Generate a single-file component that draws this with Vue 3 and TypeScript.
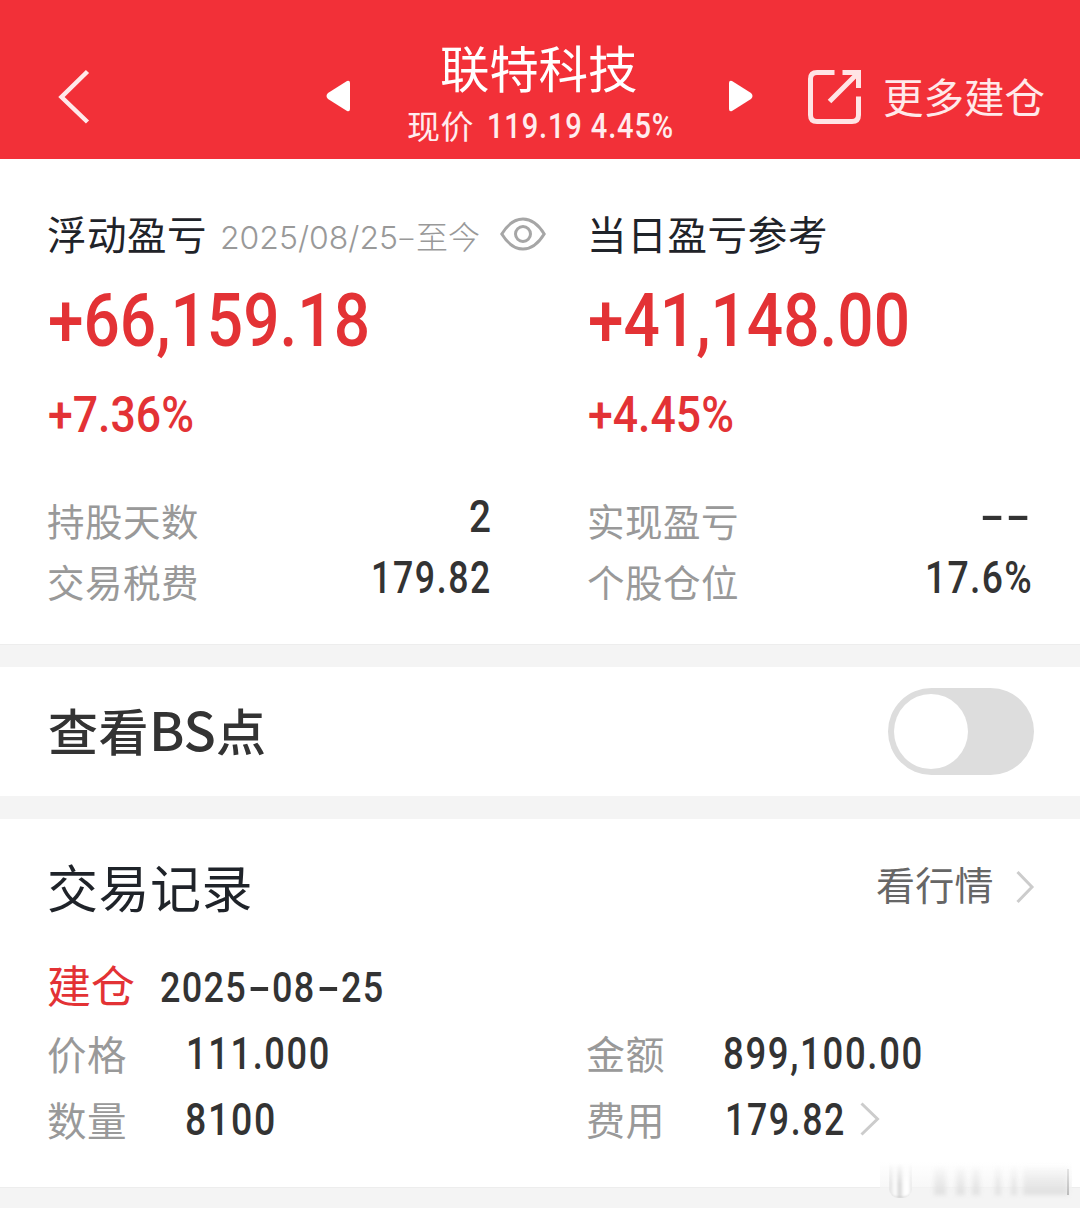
<script setup lang="ts">
import { h, type FunctionalComponent } from 'vue'

const LATIN = "Roboto, 'Liberation Sans', sans-serif"
const HAN = "'Noto Sans CJK SC', sans-serif"

interface NumProps { t: string; w: number; s: number; wt?: number; f?: string; ls?: number }
interface HanProps { t: string; s: number; p: number; wt?: number }

// Figures set to an exact advance width; the box is as tall as the digits.
const Num: FunctionalComponent<NumProps> = (p) => {
  const cap = p.s * 0.711
  return h('svg', { width: p.w, height: cap, class: 'fit' }, [
    h('text', {
      x: 0, y: cap, textLength: p.w, lengthAdjust: 'spacingAndGlyphs', fill: 'currentColor',
      'font-family': p.f ?? LATIN, 'font-size': p.s, 'font-weight': p.wt ?? 500,
      style: { letterSpacing: `${p.ls ?? 0}px` },
    }, p.t),
  ])
}
Num.props = ['t', 'w', 's', 'wt', 'f', 'ls']

// Chinese label with a fixed pitch; the box is one em tall.
const Han: FunctionalComponent<HanProps> = (p) =>
  h('svg', { width: p.p * p.t.length, height: p.s, class: 'fit' }, [
    h('text', {
      x: 0, y: p.s * 0.88, fill: 'currentColor', 'font-family': HAN, 'font-size': p.s,
      'font-weight': p.wt ?? 400, style: { letterSpacing: `${p.p - p.s}px` },
    }, p.t),
  ])
Han.props = ['t', 's', 'p', 'wt']
</script>

<template>
  <main class="page">
    <header class="bar">
      <svg class="back" width="34" height="56" viewBox="0 0 34 56" fill="none" stroke="#ffe9ea" stroke-width="4.5"><path d="M30.500 2.500 4.500 28 30.500 53" /></svg>
      <svg class="prev" width="24" height="32" viewBox="0 0 24 32" fill="#fff"><path d="M24 3v26q0 3-3 2L2 19q-3-3 0-6L21 1q3-1 3 2z" /></svg>
      <div class="title">
        <Han t="联特科技" :s="49.500" :p="49.300" />
        <div class="quote">
          <Han t="现价" :s="33" :p="33.500" />
          <Num t="119.19 4.45%" :w="187" :s="34.300" :wt="500" :ls="1" />
        </div>
      </div>
      <svg class="next" width="24" height="32" viewBox="0 0 24 32" fill="#fff"><path d="M0 3v26q0 3 3 2L22 19q3-3 0-6L3 1Q0 0 0 3z" /></svg>
      <svg class="share" width="56" height="56" viewBox="0 0 56 56" fill="none" stroke="#ffe4e5" stroke-width="5"><path d="M27.500 3.500H10Q3.500 3.500 3.500 10V46Q3.500 52.500 10 52.500H45Q51.500 52.500 51.500 46V27.500" /><path d="M35.500 3.500H51.500V19M51.500 3.500 22.500 32.500" /></svg>
      <Han class="more" t="更多建仓" :s="40.500" :p="40.500" />
    </header>

    <section class="summary">
      <div class="col left">
        <div class="head">
          <Han t="浮动盈亏" :s="39.500" :p="40" />
          <div class="range">
            <Num t="2025/08/25" :w="178" :s="31.500" :wt="300" f="Inter, sans-serif" />
            <Num class="dash" t="-" :w="17" :s="31.500" :wt="300" />
            <Han t="至今" :s="32" :p="32" :wt="300" />
          </div>
          <svg class="eye" width="46" height="34" viewBox="0 0 46 34" fill="none" stroke="#a6a6a6" stroke-width="3"><path d="M1.800 17Q11 2 23 2T44.200 17Q35 32 23 32T1.800 17Z" /><circle cx="23" cy="17" r="7.500" /></svg>
        </div>
        <Num class="big" t="+66,159.18" :w="322" :s="75" />
        <Num class="pct" t="+7.36%" :w="146" :s="49.500" />
        <div class="row r1"><Han t="持股天数" :s="37.500" :p="38" /><Num t="2" :w="22" :s="43.500" /></div>
        <div class="row"><Han t="交易税费" :s="37.500" :p="38" /><Num class="trail" t="179.82" :w="121" :s="43.500" :ls="2" /></div>
      </div>
      <div class="col right">
        <div class="head"><Han t="当日盈亏参考" :s="39.500" :p="40.200" /></div>
        <Num class="big" t="+41,148.00" :w="322" :s="75" />
        <Num class="pct" t="+4.45%" :w="146" :s="49.500" />
        <div class="row r1"><Han t="实现盈亏" :s="37.500" :p="38" /><Num class="none" t="--" :w="52" :s="43.500" :ls="1" /></div>
        <div class="row"><Han t="个股仓位" :s="37.500" :p="38" /><Num class="trail" t="17.6%" :w="108" :s="43.500" :ls="1.500" /></div>
      </div>
    </section>

    <section class="points">
      <div class="bs">
        <Han t="查看" :s="50" :p="50.500" :wt="500" />
        <Num t="BS" :w="67" :s="53" f="'Noto Sans CJK SC', sans-serif" />
        <Han t="点" :s="50" :p="50" :wt="500" />
      </div>
      <div class="switch"><i /></div>
    </section>

    <section class="records">
      <div class="rhead">
        <Han t="交易记录" :s="51" :p="51.500" />
        <div class="link">
          <Han t="看行情" :s="39" :p="39.300" />
          <svg width="18" height="34" viewBox="0 0 18 34" fill="none" stroke="#ccc" stroke-width="3"><path d="M1.500 2 16 17 1.500 32" /></svg>
        </div>
      </div>
      <div class="open">
        <Han class="tag" t="建仓" :s="44" :p="44" />
        <div class="date">
          <Num t="2025" :w="87" :s="42" :ls="1.500" /><Num class="mid" t="-" :w="23" :s="42" /><Num t="08" :w="43.500" :s="42" :ls="1.500" /><Num class="mid" t="-" :w="23" :s="42" /><Num t="25" :w="43.500" :s="42" :ls="1.500" />
        </div>
      </div>
      <div class="deal">
        <div class="cell a"><Han t="价格" :s="39.500" :p="40" /><Num class="price" t="111.000" :w="145" :s="44" :ls="2" /></div>
        <div class="cell b"><Han t="金额" :s="39" :p="39.500" /><Num t="899,100.00" :w="201" :s="44" :ls="2" /></div>
      </div>
      <div class="deal">
        <div class="cell a"><Han t="数量" :s="39.500" :p="40" /><Num t="8100" :w="92" :s="44" :ls="2" /></div>
        <div class="cell b">
          <Han t="费用" :s="39" :p="39.500" /><Num class="fee" t="179.82" :w="121" :s="44" :ls="2" />
          <svg class="arrow" width="20" height="34" viewBox="0 0 20 34" fill="none" stroke="#ccc" stroke-width="3"><path d="M1.500 1.500 17.500 17 1.500 32.500" /></svg>
        </div>
      </div>
    </section>
    <div class="smudge">
      <i class="cup" /><i class="s1" /><i class="s2" /><i class="s3" /><i class="s4" /><i class="s5" /><i class="s6" /><i class="s7" />
    </div>
  </main>
</template>

<style>
body { margin: 0; background: #f4f4f4; }
</style>
<style scoped>
.page { position: relative; width: 1080px; height: 1208px; overflow: hidden; background: #f4f4f4; color: #333; }
.page svg { display: block; flex: none; overflow: visible; }
.bar { display: flex; align-items: flex-start; box-sizing: border-box; height: 159px; background: #f23038; color: #fff; }
.back { margin: 69px 0 0 57px; }
.prev { margin: 80px 0 0 235px; }
.title { display: flex; flex-direction: column; align-items: center; width: 270px; margin: 44px 0 0 54px; }
.quote { display: flex; gap: 13px; margin: 16px 0 0 2px; color: #ffecee; }
.quote > :last-child { margin-top: 4px; }
.next { margin: 80px 0 0 55px; }
.share { margin: 69px 0 0 54px; }
.more { margin: 77px 0 0 20px; color: #ffe9ea; }
.summary { display: flex; box-sizing: border-box; height: 486px; padding: 56px 48px 0 47px; background: #fff; border-bottom: 1px solid #ededed; }
.left { width: 444px; }
.right { width: 445px; margin-left: 96px; }
.head { display: flex; height: 78px; color: #1f2329; }
.range { display: flex; align-items: flex-start; margin: 6px 0 0 13px; color: #999; }
.range > :first-child, .range > .dash { margin-top: 6px; }
.range > :last-child { margin-left: 1px; }
.eye { margin: 2px 0 0 20px; }
.big, .pct { color: #e33235; }
.big { margin-left: 1px; }
.pct { margin: 51px 0 0 1px; }
.row { display: flex; justify-content: space-between; height: 61px; color: #999; }
.row > :last-child { margin-top: 1px; color: #333; }
.row > :first-child { margin-top: 3px; }
.row > .none { margin-top: 0; }
.row > .trail { margin-right: -1px; }
.r1 { margin-top: 67px; }
.points { display: flex; align-items: center; justify-content: space-between; box-sizing: border-box; height: 129px; margin-top: 22px; padding: 0 46px 0 48px; background: #fff; }
.bs { display: flex; align-items: center; }
.switch { box-sizing: border-box; width: 146px; height: 87px; padding: 6px; border-radius: 44px; background: #ddd; }
.switch i { display: block; width: 74px; height: 75px; border-radius: 50%; background: #fff; }
.records { box-sizing: border-box; height: 369px; margin-top: 23px; padding: 44px 46px 0 47px; background: #fff; border-bottom: 1px solid #ededed; }
.rhead { display: flex; justify-content: space-between; height: 101px; color: #1f2329; }
.link { display: flex; gap: 22px; margin-top: 3px; color: #666; }
.link > :last-child { margin-top: 4px; }
.open { display: flex; gap: 25px; height: 71px; }
.tag { color: #e33235; }
.date { display: flex; margin-top: 8px; }
.date .mid { margin: 0 1px; }
.deal { display: flex; color: #999; height: 66px; }
.cell { display: flex; align-items: flex-start; }
.cell > :nth-child(2) { margin-top: 3px; color: #333; }
.a { width: 539px; }
.a > :nth-child(2) { margin-left: 58px; }
.a > .price { margin-left: 59px; }
.b > :nth-child(2) { margin-left: 58px; }
.b > .fee { margin-left: 60px; }
.arrow { margin: 1px 0 0 14px; }
.smudge { position: absolute; left: 880px; top: 1162px; width: 192px; height: 36px; background: linear-gradient(#ffffff00, #f4f4f4); }
.smudge i { position: absolute; bottom: 3px; height: 30px; background: linear-gradient(#e4e4e400, #e0e0e0); filter: blur(2px); }
.smudge .cup { left: 9px; bottom: 0; width: 23px; height: 34px; background: linear-gradient(90deg, #ddd, #fff 28%, #d6d6d6 46%, #fff 66%, #fff 86%, #ddd); border-bottom: 1px solid #bbb; border-radius: 0 0 9px 9px; filter: blur(1px); mask-image: linear-gradient(transparent, #000 60%); }
.smudge .s1 { left: 54px; width: 12px; }
.smudge .s2 { left: 76px; width: 9px; }
.smudge .s3 { left: 92px; width: 8px; }
.smudge .s4 { left: 115px; width: 6px; }
.smudge .s5 { left: 131px; width: 6px; }
.smudge .s6 { left: 143px; width: 45px; }
.smudge .s7 { left: 187px; width: 2px; height: 26px; background: linear-gradient(#e4e4e4, #bbb); filter: blur(.6px); }
</style>
